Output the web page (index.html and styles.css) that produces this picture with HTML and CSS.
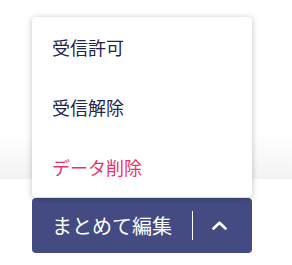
FILE: index.html
```html
<!DOCTYPE html>
<html lang="ja">
<head>
  <meta charset="UTF-8" />
  <meta name="viewport" content="width=device-width, initial-scale=1" />
  <title>まとめて編集</title>
  <link rel="stylesheet" href="styles.css">
</head>
<body>
  <div class="page"></div>

  <div class="footer">
    <div class="bulk">
      <ul class="menu">
        <li class="menu-item">受信許可</li>
        <li class="menu-item">受信解除</li>
        <li class="menu-item danger">データ削除</li>
      </ul>
      <button class="bulk-btn">
        <span class="bulk-label">まとめて編集</span>
        <span class="divider"></span>
        <svg class="chevron" width="15" height="9" viewBox="0 0 15 9">
          <path d="M1.5 7.5 L7.5 1.8 L13.5 7.5" fill="none" stroke="#fff" stroke-width="2.6" stroke-linecap="round" stroke-linejoin="round"/>
        </svg>
      </button>
    </div>
  </div>
</body>
</html>
```

FILE: styles.css
```css
body {
  margin: 0;
  font-family: "Noto Sans CJK JP", "Noto Sans", sans-serif;
  background-color: #fff;
  color: #23264a;
}
.page {
  height: 179px;
  background: linear-gradient(to bottom, #fff 75%, #f3f3f3 100%);
}
.footer {
  height: 86px;
  background-color: #fff;
  padding: 19px 40px 0 32px;
  box-sizing: border-box;
}
.bulk {
  position: relative;
  width: 220px;
}
.menu {
  position: absolute;
  left: 0;
  bottom: 100%;
  width: 220px;
  margin: 0 0 1px;
  padding: 0;
  list-style: none;
  background-color: #fff;
  border-radius: 4px;
  box-shadow: 0 1px 6px rgba(0, 0, 0, 0.25);
}
.menu-item {
  height: 60px;
  line-height: 60px;
  padding-left: 20px;
  font-size: 18px;
}
.menu-item.danger {
  color: #e6346b;
}
.bulk-btn {
  display: flex;
  align-items: center;
  width: 220px;
  height: 55px;
  padding: 0 0 0 20px;
  border: none;
  border-radius: 4px;
  background-color: #434b82;
  color: #fff;
  font-family: inherit;
  cursor: pointer;
}
.bulk-label {
  font-size: 20px;
  line-height: 1;
}
.divider {
  width: 1px;
  height: 29px;
  margin-left: 20px;
  background-color: #fff;
}
.chevron {
  margin-left: 19px;
}
```
